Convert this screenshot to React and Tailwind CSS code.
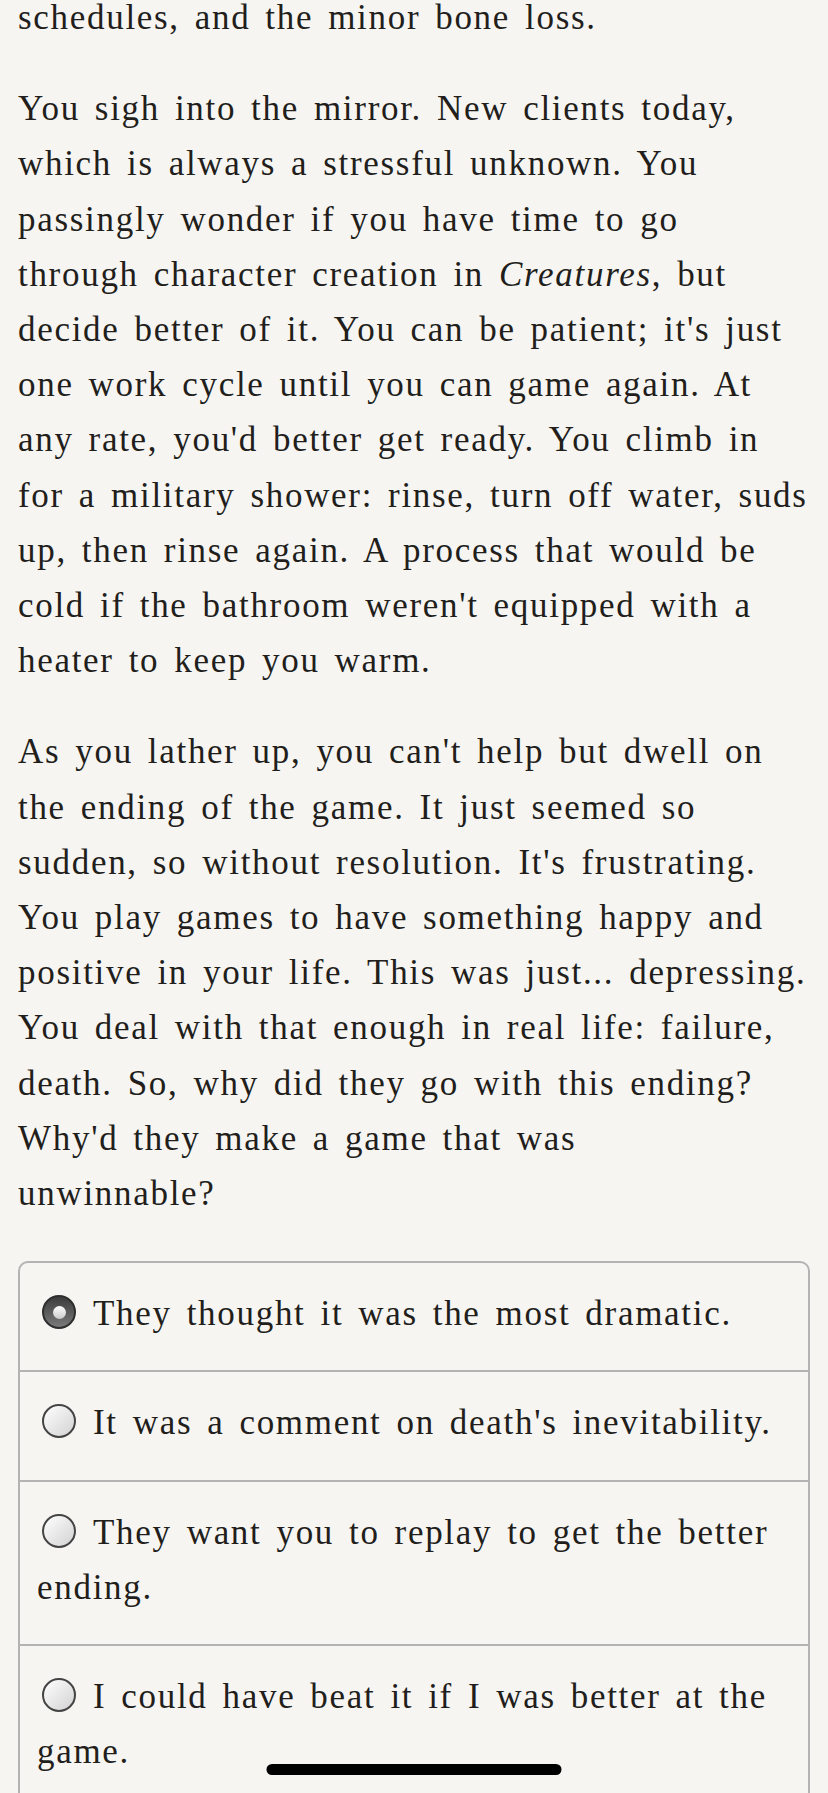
import React from 'react';

const paragraphs = [
  [['schedules, and the minor bone loss.']],
  [
    ['You sigh into the mirror. New clients today,'],
    ['which is always a stressful unknown. You'],
    ['passingly wonder if you have time to go'],
    ['through character creation in ', { i: 'Creatures' }, ', but'],
    ["decide better of it. You can be patient; it's just"],
    ['one work cycle until you can game again. At'],
    ["any rate, you'd better get ready. You climb in"],
    ['for a military shower: rinse, turn off water, suds'],
    ['up, then rinse again. A process that would be'],
    ["cold if the bathroom weren't equipped with a"],
    ['heater to keep you warm.'],
  ],
  [
    ["As you lather up, you can't help but dwell on"],
    ['the ending of the game. It just seemed so'],
    ["sudden, so without resolution. It's frustrating."],
    ['You play games to have something happy and'],
    ['positive in your life. This was just... depressing.'],
    ['You deal with that enough in real life: failure,'],
    ['death. So, why did they go with this ending?'],
    ["Why'd they make a game that was"],
    ['unwinnable?'],
  ],
];

const choices = [
  { lines: ['They thought it was the most dramatic.'], selected: true },
  { lines: ["It was a comment on death's inevitability."] },
  { lines: ['They want you to replay to get the better', 'ending.'] },
  { lines: ['I could have beat it if I was better at the', 'game.'] },
];

function Radio({ selected }) {
  if (selected) {
    return (
      <span className="inline-block w-[34px] h-[34px] p-[8.5px] rounded-full border-2 border-[#2e2e2e] bg-gradient-to-b from-[#3d3d3d] to-[#7a7a7a] ml-[5px] mr-[17px] align-[-4px]">
        <span className="block w-[13px] h-[13px] rounded-full bg-gradient-to-b from-[#ffffff] to-[#c9c9c9]" />
      </span>
    );
  }
  return (
    <span className="inline-block w-[34px] h-[34px] rounded-full border-2 border-[#444] bg-gradient-to-br from-[#ffffff] to-[#d2d2d2] ml-[5px] mr-[17px] align-[-4px]" />
  );
}

export default function App() {
  return (
    <div className="relative h-[1793px] overflow-hidden bg-[#f7f5f2] text-[#221e1b] font-['Liberation_Serif',serif] text-[35px] leading-[55.2px] tracking-[1.7px] [word-spacing:4.5px]">
      <div className="px-[18px] -mt-[10px]">
        {paragraphs.map((p, pi) => (
          <p key={pi} className="mb-[36px]">
            {p.map((line, li) => (
              <span key={li} className="block whitespace-nowrap">
                {line.map((part, k) =>
                  typeof part === 'string' ? part : <em key={k}>{part.i}</em>
                )}
              </span>
            ))}
          </p>
        ))}

        <div className="border-2 border-[#b3b3b3] rounded-[10px] mt-[40px]">
          {choices.map((c, i) => (
            <div
              key={i}
              className={`px-[17px] pt-[23px] pb-[29px] ${i > 0 ? 'border-t-2 border-[#b3b3b3]' : ''}`}
            >
              {c.lines.map((l, li) => (
                <span key={li} className="block whitespace-nowrap">
                  {li === 0 && <Radio selected={c.selected} />}
                  {l}
                </span>
              ))}
            </div>
          ))}
        </div>
      </div>

      {/* home indicator */}
      <div className="absolute left-1/2 -translate-x-1/2 bottom-[18px] w-[295px] h-[11px] rounded-full bg-black" />
    </div>
  );
}
